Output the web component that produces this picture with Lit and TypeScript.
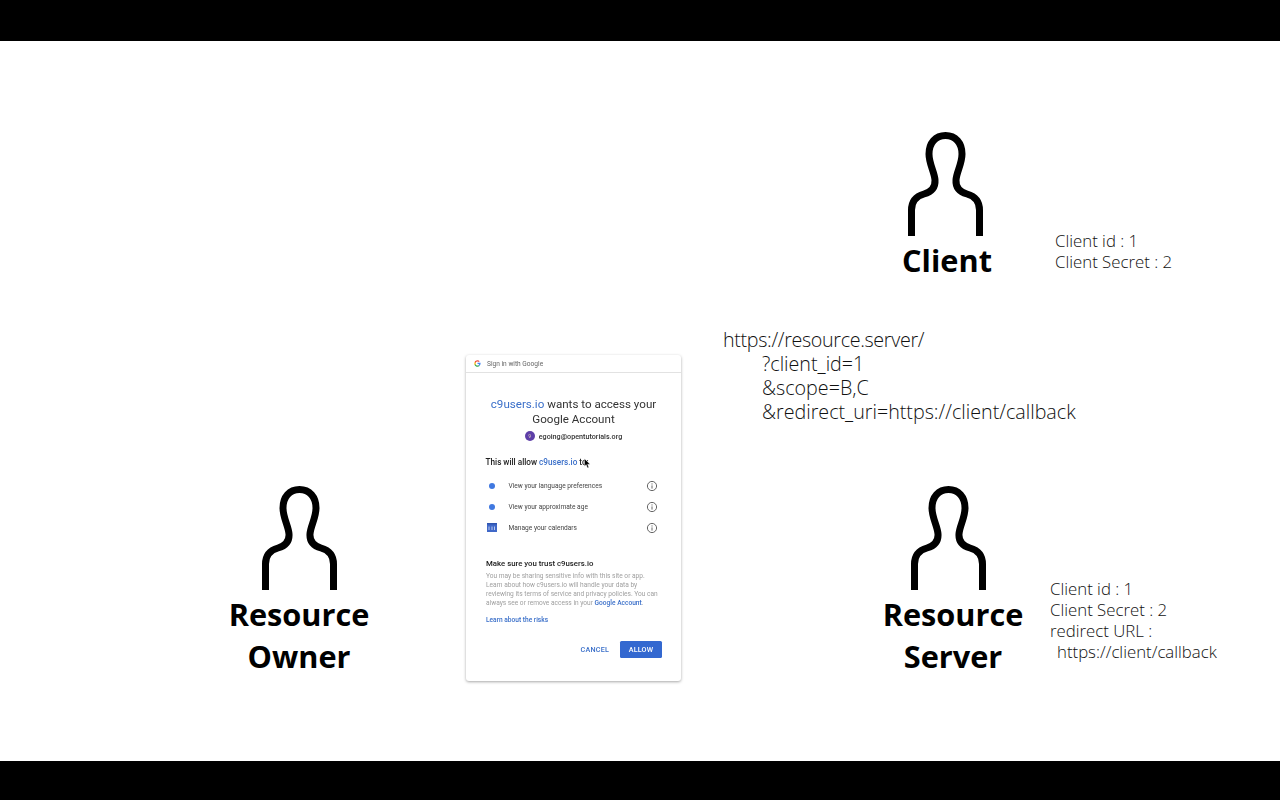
import { LitElement, html, css, svg } from "lit";
import { customElement } from "lit/decorators.js";

const person = html`<svg class="person" viewBox="0 0 75 104" width="75" height="104" fill="none" stroke="#000" stroke-width="7">
  ${svg`<path d="M3.500 104V78C3.500 68 9 64 16 62C23 60 27.500 56 27 48C26.500 40 21 32 21 22C21 11 27.500 3.500 37.500 3.500C47.500 3.500 54 11 54 22C54 32 48.500 40 48 48C47.500 56 52 60 59 62C66 64 71.500 68 71.500 78V104"/>`}
</svg>`;

const info = html`<svg class="info" viewBox="0 0 12 12" width="12" height="12" fill="none" stroke="#666" stroke-width="1">
  ${svg`<circle cx="6" cy="6" r="4.600"/><path d="M6 5.400V8.600M6 3.400V4.500"/>`}
</svg>`;

@customElement("app-root")
export class AppRoot extends LitElement {
  static styles = css`
    :host { display: block; width: 1280px; height: 800px; background: #000; overflow: hidden; font-family: "Open Sans", sans-serif; }
    .bar-top { height: 41px; background: #000; }
    .bar-bottom { height: 39px; background: #000; }
    .slide { position: relative; height: 720px; background: #fff; }
    .actor { position: absolute; display: flex; flex-direction: column; align-items: center; width: 200px; }
    .actor-client { left: 847px; top: 91px; }
    .actor-owner { left: 199px; top: 445px; }
    .actor-server { left: 853px; top: 445px; }
    .actor-client .person { margin-left: -4px; }
    .actor-server .person { margin-left: -9px; }
    .person { display: block; }
    .name { font-weight: 700; font-size: 30.7px; line-height: 41.5px; color: #000; text-align: center; margin-top: 4px; }
    .note { position: absolute; font-weight: 300; font-size: 16.8px; line-height: 21.3px; color: #111; white-space: pre; }
    .note-client { left: 1055px; top: 188.500px; }
    .note-server { left: 1050px; top: 536.500px; }
    .indent { margin-left: 7px; }
    .url { position: absolute; left: 723px; top: 287px; font-weight: 300; font-size: 19.7px; line-height: 24px; color: #111; white-space: nowrap; }
    .url div + div { padding-left: 39px; }
    .url-base { letter-spacing: -.33px; }
    .card { position: absolute; left: 466px; top: 314px; width: 215px; height: 326px; box-sizing: border-box; background: #fff; border-radius: 3px; box-shadow: 0 1px 3px rgba(0,0,0,.35); font-family: Roboto, sans-serif; color: #222; filter: blur(.4px); display: flex; flex-direction: column; }
    .card-head { height: 17px; display: flex; align-items: center; gap: 6px; padding-left: 8px; border-bottom: 1px solid #e2e2e2; font-size: 6.6px; color: #666; }
    .title { margin-top: 24px; text-align: center; font-size: 11.6px; line-height: 15px; color: #333; }
    .blue { color: #3a6fc9; }
    .account { margin-top: 4px; display: flex; justify-content: center; align-items: center; gap: 4px; font-size: 7.2px; font-weight: 500; color: #333; }
    .avatar { width: 10px; height: 10px; border-radius: 50%; background: #5e3fa8; color: #cbb; font-size: 5px; display: flex; align-items: center; justify-content: center; }
    .allow { margin: 16px 0 0 19.500px; font-size: 8.2px; font-weight: 500; color: #222; }
    .allow .blue { font-weight: 500; }
    .perms { margin: 8px 21px 0 20px; display: flex; flex-direction: column; }
    .perm { height: 21px; display: flex; align-items: center; font-size: 6.6px; color: #444; }
    .perm-icon { width: 22.500px; display: flex; align-items: center; padding-left: 2.500px; box-sizing: border-box; }
    .dot { width: 6px; height: 6px; border-radius: 50%; background: #4078e0; }
    .cal { display: block; margin-left: -2px; }
    .perm-text { flex: 1; }
    .info { margin-right: 2px; margin-left: -2px; }
    .trust-h { margin: 21px 0 0 20px; font-size: 7.8px; font-weight: 500; color: #222; }
    .trust { margin: 4px 18px 0 20px; font-size: 6.6px; line-height: 9.1px; color: #a0a0a0; }
    .strong-blue { color: #3a6fc9; font-weight: 500; }
    .risks { margin: 7.500px 0 0 20px; font-size: 6.6px; font-weight: 500; color: #3a6fc9; }
    .actions { margin: 17.500px 19px 0 0; display: flex; justify-content: flex-end; align-items: center; gap: 11px; font-size: 7.2px; font-weight: 500; letter-spacing: .2px; }
    .cancel { color: #3a6fc9; }
    .allow-btn { width: 42px; height: 17px; background: #3368d0; color: #fff; border-radius: 1.500px; display: flex; align-items: center; justify-content: center; }
    .cursor { position: absolute; left: 584px; top: 417px; }
  `;

  render() {
    return html`
      <div class="bar-top"></div>
      <div class="slide">
        <div class="actor actor-client">${person}<div class="name">Client</div></div>
        <div class="actor actor-owner">${person}<div class="name">Resource<br />Owner</div></div>
        <div class="actor actor-server">${person}<div class="name">Resource<br />Server</div></div>
        <div class="note note-client">Client id : 1
Client Secret : 2</div>
        <div class="note note-server">Client id : 1
Client Secret : 2
redirect URL :
<span class="indent">https://client/callback</span></div>
        <div class="url">
          <div class="url-base">https://resource.server/</div>
          <div>?client_id=1</div>
          <div>&amp;scope=B,C</div>
          <div>&amp;redirect_uri=https://client/callback</div>
        </div>
        <div class="card">
          <div class="card-head">
            <svg viewBox="0 0 48 48" width="7" height="7">
              ${svg`<path fill="#4285f4" d="M45 24c0-1.500-.1-3-.4-4.400H24v8.400h11.800c-.5 2.700-2 5-4.400 6.500v5.500h7C42.600 36 45 30.500 45 24z"/><path fill="#34a853" d="M24 46c5.900 0 10.900-2 14.400-5.300l-7-5.500c-2 1.300-4.500 2.100-7.400 2.100-5.700 0-10.500-3.800-12.300-9H4.500v5.600C8.100 41.100 15.500 46 24 46z"/><path fill="#fbbc05" d="M11.700 28.300c-.9-2.700-.9-5.900 0-8.600v-5.600H4.500c-3 5.900-3 13.900 0 19.800z"/><path fill="#ea4335" d="M24 10.700c3.200 0 6.100 1.100 8.400 3.300l6.200-6.200C34.800 4.200 29.900 2 24 2 15.500 2 8.100 6.900 4.500 14.100l7.200 5.600c1.800-5.200 6.600-9 12.300-9z"/>`}
            </svg>
            <span>Sign in with Google</span>
          </div>
          <div class="title"><span class="blue">c9users.io</span> wants to access your<br />Google Account</div>
          <div class="account"><span class="avatar">9</span><span>egoing@opentutorials.org</span></div>
          <div class="allow">This will allow <span class="blue">c9users.io</span> to:</div>
          <div class="perms">
            <div class="perm"><span class="perm-icon"><span class="dot"></span></span><span class="perm-text">View your language preferences</span>${info}</div>
            <div class="perm"><span class="perm-icon"><span class="dot"></span></span><span class="perm-text">View your approximate age</span>${info}</div>
            <div class="perm"><span class="perm-icon"><svg class="cal" viewBox="0 0 10 9" width="10" height="9">${svg`<rect width="10" height="9" fill="#4068c8"/><rect y="0" width="10" height="1.500" fill="#2f55b0"/><path d="M2 3.500V7M5 3.500V7M7.500 3.500V7" stroke="#b9c9ee" stroke-width="1"/>`}</svg></span><span class="perm-text">Manage your calendars</span>${info}</div>
          </div>
          <div class="trust-h">Make sure you trust c9users.io</div>
          <div class="trust">You may be sharing sensitive info with this site or app.<br />Learn about how c9users.io will handle your data by<br />reviewing its terms of service and privacy policies. You can<br />always see or remove access in your <span class="strong-blue">Google Account</span>.</div>
          <div class="risks">Learn about the risks</div>
          <div class="actions"><span class="cancel">CANCEL</span><span class="allow-btn">ALLOW</span></div>
        </div>
        <svg class="cursor" viewBox="0 0 8 12" width="7" height="11">
          ${svg`<path d="M.5.5V9L2.500 7.300 4 11 5.500 10.300 4 6.800H7z" fill="#000" stroke="#fff" stroke-width=".5"/>`}
        </svg>
      </div>
      <div class="bar-bottom"></div>
    `;
  }
}
